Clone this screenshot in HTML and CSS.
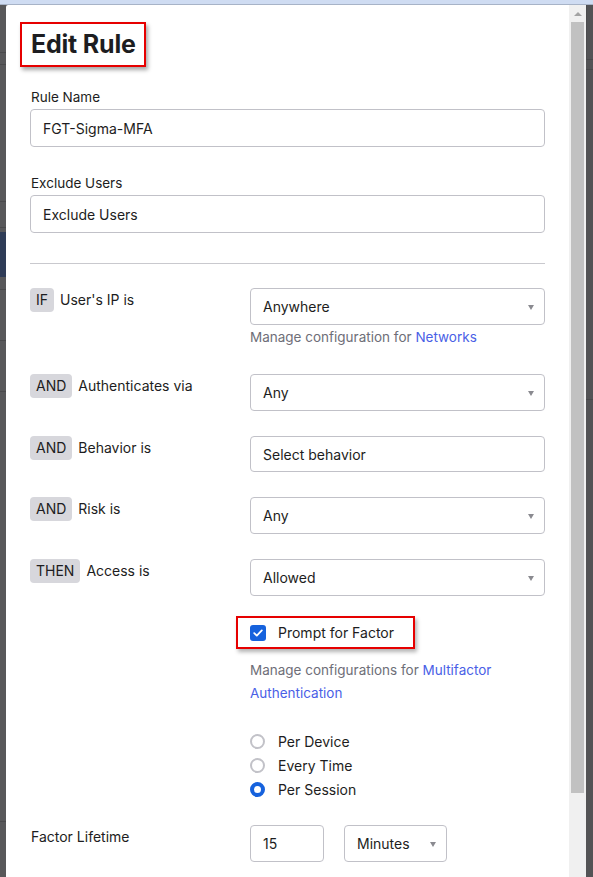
FILE: index.html
```html
<!DOCTYPE html>
<html lang="en">
<head>
<meta charset="utf-8">
<title>Edit Rule</title>
<link rel="stylesheet" href="styles.css">
</head>
<body>
<div class="topbar"></div>
<div class="stage">
  <div class="bg-left">
    <div class="bg-row bg-r1"></div>
    <div class="bg-row bg-r1b"></div>
    <div class="bg-row bg-r2"></div>
    <div class="bg-row bg-r3"></div>
    <div class="bg-row bg-nav"></div>
    <div class="bg-row bg-r4"></div>
    <div class="bg-row bg-r5"></div>
    <div class="bg-row bg-r6"></div>
    <div class="bg-row bg-r7"></div>
  </div>
  <div class="modal">
    <div class="content">
      <h1 class="title">Edit Rule</h1>

      <div class="field-label first">Rule Name</div>
      <div class="box input">FGT-Sigma-MFA</div>

      <div class="field-label">Exclude Users</div>
      <div class="box input">Exclude Users</div>

      <hr class="divider">

      <div class="rule-row">
        <div class="cond"><span class="badge">IF</span><span class="cond-text">User's IP is</span></div>
        <div class="ctrl">
          <div class="box select">Anywhere<span class="caret"></span></div>
          <div class="help">Manage configuration for <a class="link">Networks</a></div>
        </div>
      </div>

      <div class="rule-row">
        <div class="cond"><span class="badge">AND</span><span class="cond-text">Authenticates via</span></div>
        <div class="ctrl">
          <div class="box select">Any<span class="caret"></span></div>
        </div>
      </div>

      <div class="rule-row">
        <div class="cond"><span class="badge">AND</span><span class="cond-text">Behavior is</span></div>
        <div class="ctrl">
          <div class="box input short">Select behavior</div>
        </div>
      </div>

      <div class="rule-row">
        <div class="cond"><span class="badge">AND</span><span class="cond-text">Risk is</span></div>
        <div class="ctrl">
          <div class="box select">Any<span class="caret"></span></div>
        </div>
      </div>

      <div class="rule-row last">
        <div class="cond"><span class="badge">THEN</span><span class="cond-text">Access is</span></div>
        <div class="ctrl">
          <div class="box select">Allowed<span class="caret"></span></div>
        </div>
      </div>

      <div class="sub">
        <div class="check-highlight">
          <span class="checkbox">
            <svg width="10" height="8" viewBox="0 0 10 8"><path d="M1.2 4.1 L3.8 6.6 L8.8 1.4" fill="none" stroke="#fff" stroke-width="1.8" stroke-linecap="round" stroke-linejoin="round"/></svg>
          </span>
          <span class="check-text">Prompt for Factor</span>
        </div>
        <div class="help mfa">
          <div>Manage configurations for <a class="link">Multifactor</a></div>
          <div><a class="link">Authentication</a></div>
        </div>
        <div class="radios">
          <div class="radio-row"><span class="radio"></span><span>Per Device</span></div>
          <div class="radio-row"><span class="radio"></span><span>Every Time</span></div>
          <div class="radio-row"><span class="radio on"></span><span>Per Session</span></div>
        </div>
      </div>

      <div class="lifetime">
        <div class="lt-label">Factor Lifetime</div>
        <div class="lt-ctrls">
          <div class="box input num">15</div>
          <div class="box select unit">Minutes<span class="caret"></span></div>
        </div>
      </div>
    </div>
    <div class="scrollbar">
      <div class="sb-up"><span class="sb-tri"></span></div>
      <div class="sb-thumb"></div>
    </div>
  </div>
  <div class="bg-right">
    <div class="bgr-row bgr1"></div>
    <div class="bgr-row bgr2"></div>
    <div class="bgr-row bgr3"></div>
  </div>
</div>
</body>
</html>
```

FILE: styles.css
```css
* { box-sizing: border-box; }

html, body {
  margin: 0;
  padding: 0;
  height: 877px;
  overflow: hidden;
}

body {
  background: #575759;
  font-family: Inter, "Noto Sans", sans-serif;
  font-size: 14px;
  color: #1d1d21;
}

.topbar {
  height: 5px;
  background: #cfdcf2;
  border-bottom: 1px solid #a7b3c7;
}

.stage {
  display: flex;
  height: 872px;
}

/* dimmed page behind the modal */
.bg-left {
  width: 6px;
  flex: none;
  overflow: hidden;
  background: #58585a;
}
.bg-row {
  border-bottom: 1px solid #4a4a4c;
}
.bg-r1 { height: 48px; }
.bg-r1b { height: 12px; }
.bg-r2 { height: 137px; }
.bg-r3 { height: 26px; }
.bg-nav { height: 45px; background: #2f3c57; border-bottom: none; margin-top: 4px; }
.bg-r4 { height: 13px; }
.bg-r5 { height: 51px; }
.bg-r6 { height: 51px; }
.bg-r7 { height: 430px; }

.bg-right {
  width: 7px;
  flex: none;
  overflow: hidden;
  background: #535355;
}
.bgr-row { border-bottom: 1px solid #48484a; }
.bgr1 { height: 55px; border-left: 1px solid #4c4c4e; }
.bgr2 { height: 10px; }
.bgr3 { height: 330px; }

/* modal */
.modal {
  flex: 1;
  background: #fff;
  display: flex;
  border-top-left-radius: 2px;
  overflow: hidden;
}

.content {
  flex: 1;
  padding: 0 24px;
  overflow: hidden;
}

.title {
  display: inline-block;
  margin: 17px 0 0 -10px;
  padding: 0 8px 0 9px;
  height: 45px;
  line-height: 41px;
  border: 2px solid #e60000;
  box-shadow: 2px 3px 4px rgba(0, 0, 0, 0.35);
  font-size: 25px;
  font-weight: 700;
  letter-spacing: -0.2px;
  color: #1d1d21;
}

.field-label {
  line-height: 18px;
  margin: 27px 0 3px 1px;
  font-size: 13.5px;
}
.field-label.first { margin-top: 21px; }

.box {
  border: 1px solid #c1c1c8;
  border-radius: 4px;
  background: #fff;
  display: flex;
  align-items: center;
  padding: 0 12px;
  white-space: nowrap;
}

.input { height: 38px; }
.input.short { height: 36px; }

.select {
  height: 37px;
  justify-content: space-between;
}

.caret {
  width: 0;
  height: 0;
  border-left: 3.5px solid transparent;
  border-right: 3.5px solid transparent;
  border-top: 5px solid #8a8a90;
  margin-right: -2px;
  margin-top: 2px;
}

.divider {
  border: none;
  border-top: 1px solid #c9c9ce;
  margin: 30px 0 24px;
  height: 0;
}

.rule-row {
  display: grid;
  grid-template-columns: 220px 1fr;
  margin-bottom: 25px;
}
.rule-row.last { margin-bottom: 20px; }

.cond {
  display: flex;
  align-items: flex-start;
  gap: 6px;
}

.badge {
  background: #d7d7dc;
  border-radius: 4px;
  height: 24px;
  line-height: 24px;
  padding: 0 6px;
  color: #1d1d21;
  font-size: 14px;
}

.cond-text {
  line-height: 24px;
}

.help {
  color: #6e6e78;
  line-height: 24px;
  font-size: 13.5px;
}

.help > div { white-space: nowrap; }

.link {
  color: #4a5fe6;
  text-decoration: none;
}

.sub {
  margin-left: 220px;
}

.check-highlight {
  display: inline-flex;
  align-items: center;
  margin-left: -14px;
  height: 33px;
  width: 179px;
  padding-left: 12px;
  border: 2px solid #e60000;
  box-shadow: 2px 3px 4px rgba(0, 0, 0, 0.3);
  gap: 12px;
}

.checkbox {
  width: 16px;
  height: 16px;
  border-radius: 3px;
  background: #1662dd;
  display: inline-flex;
  align-items: center;
  justify-content: center;
}

.help.mfa {
  margin-top: 10px;
  line-height: 23px;
}

.radios {
  margin-top: 24px;
}

.radio-row {
  display: flex;
  align-items: center;
  height: 24px;
  gap: 13px;
}

.radio {
  width: 15px;
  height: 15px;
  border-radius: 50%;
  border: 2px solid #c2c2c8;
  background: #fff;
}
.radio.on {
  border: 4.5px solid #1662dd;
}

.lifetime {
  display: grid;
  grid-template-columns: 220px 1fr;
  margin-top: 24px;
}

.lt-label {
  line-height: 24px;
  margin-left: 1px;
}

.lt-ctrls {
  display: flex;
  gap: 20px;
}

.num { width: 74px; height: 37px; }
.unit { width: 103px; padding-right: 12px; }

/* scrollbar */
.scrollbar {
  width: 17px;
  flex: none;
  background: #f0f0f0;
  display: flex;
  flex-direction: column;
  align-items: center;
}

.sb-up {
  height: 17px;
  display: flex;
  align-items: center;
  justify-content: center;
}

.sb-tri {
  width: 0;
  height: 0;
  border-left: 4px solid transparent;
  border-right: 4px solid transparent;
  border-bottom: 4px solid #a3a3a3;
}

.sb-thumb {
  width: 13px;
  height: 771px;
  background: #c1c1c1;
}
```
